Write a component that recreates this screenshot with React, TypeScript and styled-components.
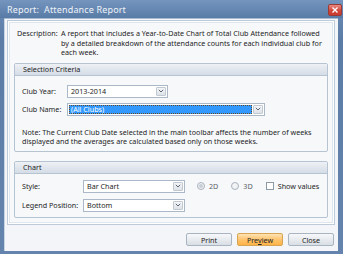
import React from 'react';
import styled, { createGlobalStyle } from 'styled-components';

const GlobalStyle = createGlobalStyle`
    html, body {
        margin: 0;
        padding: 0;
        background: #ffffff;
    }
    * {
        box-sizing: border-box;
    }
`;

const Window = styled.div`
    width: 343px;
    height: 254px;
    display: flex;
    flex-direction: column;
    background: linear-gradient(#6d8db8, #5a7ca6 40px, #6584ad);
    font-family: 'Noto Sans', 'Liberation Sans', sans-serif;
    font-size: 7.2px;
    color: #1e1e1e;
    overflow: hidden;
`;

const TitleBar = styled.div`
    height: 18px;
    display: flex;
    align-items: center;
    justify-content: space-between;
    padding: 0 1px 0 7px;
    background: linear-gradient(#7595be, #587ba6);
`;

const TitleText = styled.span`
    font-size: 9px;
    color: #eef3f9;
    letter-spacing: 0.15px;
    padding-top: 1px;
`;

const CloseBox = styled.div`
    width: 14px;
    height: 12px;
    margin-top: 1px;
    display: flex;
    align-items: center;
    justify-content: center;
    border: 1px solid #9a3a34;
    border-radius: 2px;
    background: linear-gradient(#e98a82, #d2463c 55%, #c93a30);
`;

const Client = styled.div`
    flex: 1;
    margin: 0 5px 3px 4px;
    display: flex;
    flex-direction: column;
    background: #f3f5f8;
    border-top: 1px solid #a9bbd1;
    box-shadow: inset 1px 0 0 #c9d5e3;
`;

const Panel = styled.div`
    margin: 1px 3px 0 3px;
    height: 205px;
    padding: 8px 6px 0 6px;
    display: flex;
    flex-direction: column;
    background: #f7f8fa;
    border: 1px solid #bccad9;
    box-shadow: inset 0 0 0 1px #ffffff, inset 0 0 0 2px #dfe6ee;
`;

const DescRow = styled.div`
    display: flex;
    padding-left: 3px;
    line-height: 9.5px;
`;

const DescLabel = styled.span`
    width: 44px;
    flex: none;
`;

const DescText = styled.span`
    white-space: nowrap;
`;

const Group = styled.div<{ $mt: number }>`
    margin-top: ${(p) => p.$mt}px;
    border: 1px solid #b6c3d2;
    border-radius: 2px;
    background: #f6f8fa;
`;

const GroupHeader = styled.div`
    height: 12px;
    padding-left: 8px;
    display: flex;
    align-items: center;
    background: linear-gradient(#eef1f5, #d4dce6);
    border-bottom: 1px solid #b6c3d2;
    color: #1c1c1c;
`;

const GroupBody = styled.div<{ $pt: number; $pb: number; $gap: number }>`
    padding: ${(p) => p.$pt}px 7px ${(p) => p.$pb}px 7px;
    display: flex;
    flex-direction: column;
    gap: ${(p) => p.$gap}px;
`;

const FieldRow = styled.div`
    display: flex;
    align-items: center;
    height: 13px;
`;

const FieldLabel = styled.span<{ $w: number }>`
    width: ${(p) => p.$w}px;
    flex: none;
`;

const Select = styled.div<{ $w: number }>`
    width: ${(p) => p.$w}px;
    height: 13px;
    display: flex;
    align-items: stretch;
    background: #ffffff;
    border: 1px solid #abb8c7;
    padding: 1px;
`;

const SelectValue = styled.div<{ $selected?: boolean }>`
    flex: 1;
    display: flex;
    align-items: center;
    padding-left: 2px;
    margin-right: 1px;
    color: ${(p) => (p.$selected ? '#ffffff' : '#1e1e1e')};
    background: ${(p) => (p.$selected ? '#3399ff' : 'transparent')};
    outline: ${(p) => (p.$selected ? '1px dotted #6b4a2a' : 'none')};
    outline-offset: -1px;
`;

const ArrowBox = styled.div`
    width: 10px;
    display: flex;
    align-items: center;
    justify-content: center;
    border: 1px solid #c0c8d2;
    border-radius: 1px;
    background: linear-gradient(#f4f6f8, #dde2e8);
`;

const Note = styled.div`
    margin-top: 7px;
    line-height: 9.5px;
    white-space: nowrap;
`;

const Options = styled.div`
    display: flex;
    align-items: center;
    margin-left: 12px;
`;

const Option = styled.label<{ $mr: number; $muted?: boolean }>`
    display: flex;
    align-items: center;
    gap: 4px;
    margin-right: ${(p) => p.$mr}px;
    color: ${(p) => (p.$muted ? '#5a5f66' : '#1e1e1e')};
`;

const Radio = styled.span<{ $checked?: boolean }>`
    width: 8px;
    height: 8px;
    border-radius: 50%;
    border: 1px solid #a9b2bd;
    background: #f1f3f5;
    display: flex;
    align-items: center;
    justify-content: center;
    &::after {
        content: '';
        width: 4px;
        height: 4px;
        border-radius: 50%;
        background: ${(p) => (p.$checked ? '#c8ced6' : 'transparent')};
    }
`;

const Check = styled.span`
    width: 8px;
    height: 8px;
    border: 1px solid #8f9aa7;
    background: #ffffff;
`;

const ButtonBar = styled.div`
    display: flex;
    justify-content: flex-end;
    gap: 5px;
    margin-top: 8px;
    padding-right: 4px;
`;

const Button = styled.div<{ $primary?: boolean }>`
    width: 46px;
    height: 13px;
    display: flex;
    align-items: center;
    justify-content: center;
    border-radius: 2px;
    border: 1px solid ${(p) => (p.$primary ? '#d7a456' : '#a9b4c1')};
    background: ${(p) =>
        p.$primary
            ? 'linear-gradient(#ffe3b4, #ffc46e 50%, #ffb347)'
            : 'linear-gradient(#f7f8fa, #e8ebef 50%, #d9dee5)'};
    color: #222;
`;

const Chevron = () => (
    <svg width="6" height="4" viewBox="0 0 6 4">
        <path d="M0.8 0.8 L3 3 L5.2 0.8" fill="none" stroke="#5b6470" strokeWidth="1" />
    </svg>
);

const Dropdown = ({ w, value, selected }: { w: number; value: string; selected?: boolean }) => (
    <Select $w={w}>
        <SelectValue $selected={selected}>{value}</SelectValue>
        <ArrowBox>
            <Chevron />
        </ArrowBox>
    </Select>
);

export default function App() {
    return (
        <>
            <GlobalStyle />
            <Window>
                <TitleBar>
                    <TitleText>Report:&nbsp; Attendance Report</TitleText>
                    <CloseBox>
                        <svg width="6" height="6" viewBox="0 0 6 6">
                            <path d="M0.5 0.5 L5.5 5.5 M5.5 0.5 L0.5 5.5" stroke="#fff" strokeWidth="1.4" />
                        </svg>
                    </CloseBox>
                </TitleBar>
                <Client>
                    <Panel>
                        <DescRow>
                            <DescLabel>Description:</DescLabel>
                            <DescText>
                                A report that includes a Year-to-Date Chart of Total Club Attendance followed
                                <br />
                                by a detailed breakdown of the attendance counts for each individual club for
                                <br />
                                each week.
                            </DescText>
                        </DescRow>

                        <Group $mt={5}>
                            <GroupHeader>Selection Criteria</GroupHeader>
                            <GroupBody $pt={9} $pb={4} $gap={5}>
                                <FieldRow>
                                    <FieldLabel $w={45}>Club Year:</FieldLabel>
                                    <Dropdown w={101} value="2013-2014" />
                                </FieldRow>
                                <FieldRow>
                                    <FieldLabel $w={45}>Club Name:</FieldLabel>
                                    <Dropdown w={198} value="(All Clubs)" selected />
                                </FieldRow>
                                <Note>
                                    Note: The Current Club Date selected in the main toolbar affects the number of weeks
                                    <br />
                                    displayed and the averages are calculated based only on those weeks.
                                </Note>
                            </GroupBody>
                        </Group>

                        <Group $mt={9}>
                            <GroupHeader>Chart</GroupHeader>
                            <GroupBody $pt={6} $pb={5} $gap={6}>
                                <FieldRow>
                                    <FieldLabel $w={61}>Style:</FieldLabel>
                                    <Dropdown w={102} value="Bar Chart" />
                                    <Options>
                                        <Option $mr={13} $muted>
                                            <Radio $checked />
                                            2D
                                        </Option>
                                        <Option $mr={13} $muted>
                                            <Radio />
                                            3D
                                        </Option>
                                        <Option $mr={0}>
                                            <Check />
                                            Show values
                                        </Option>
                                    </Options>
                                </FieldRow>
                                <FieldRow>
                                    <FieldLabel $w={61}>Legend Position:</FieldLabel>
                                    <Dropdown w={102} value="Bottom" />
                                </FieldRow>
                            </GroupBody>
                        </Group>
                    </Panel>
                    <ButtonBar>
                        <Button>Print</Button>
                        <Button $primary>
                            <span>
                                Pre<u>v</u>iew
                            </span>
                        </Button>
                        <Button>Close</Button>
                    </ButtonBar>
                </Client>
            </Window>
        </>
    );
}
